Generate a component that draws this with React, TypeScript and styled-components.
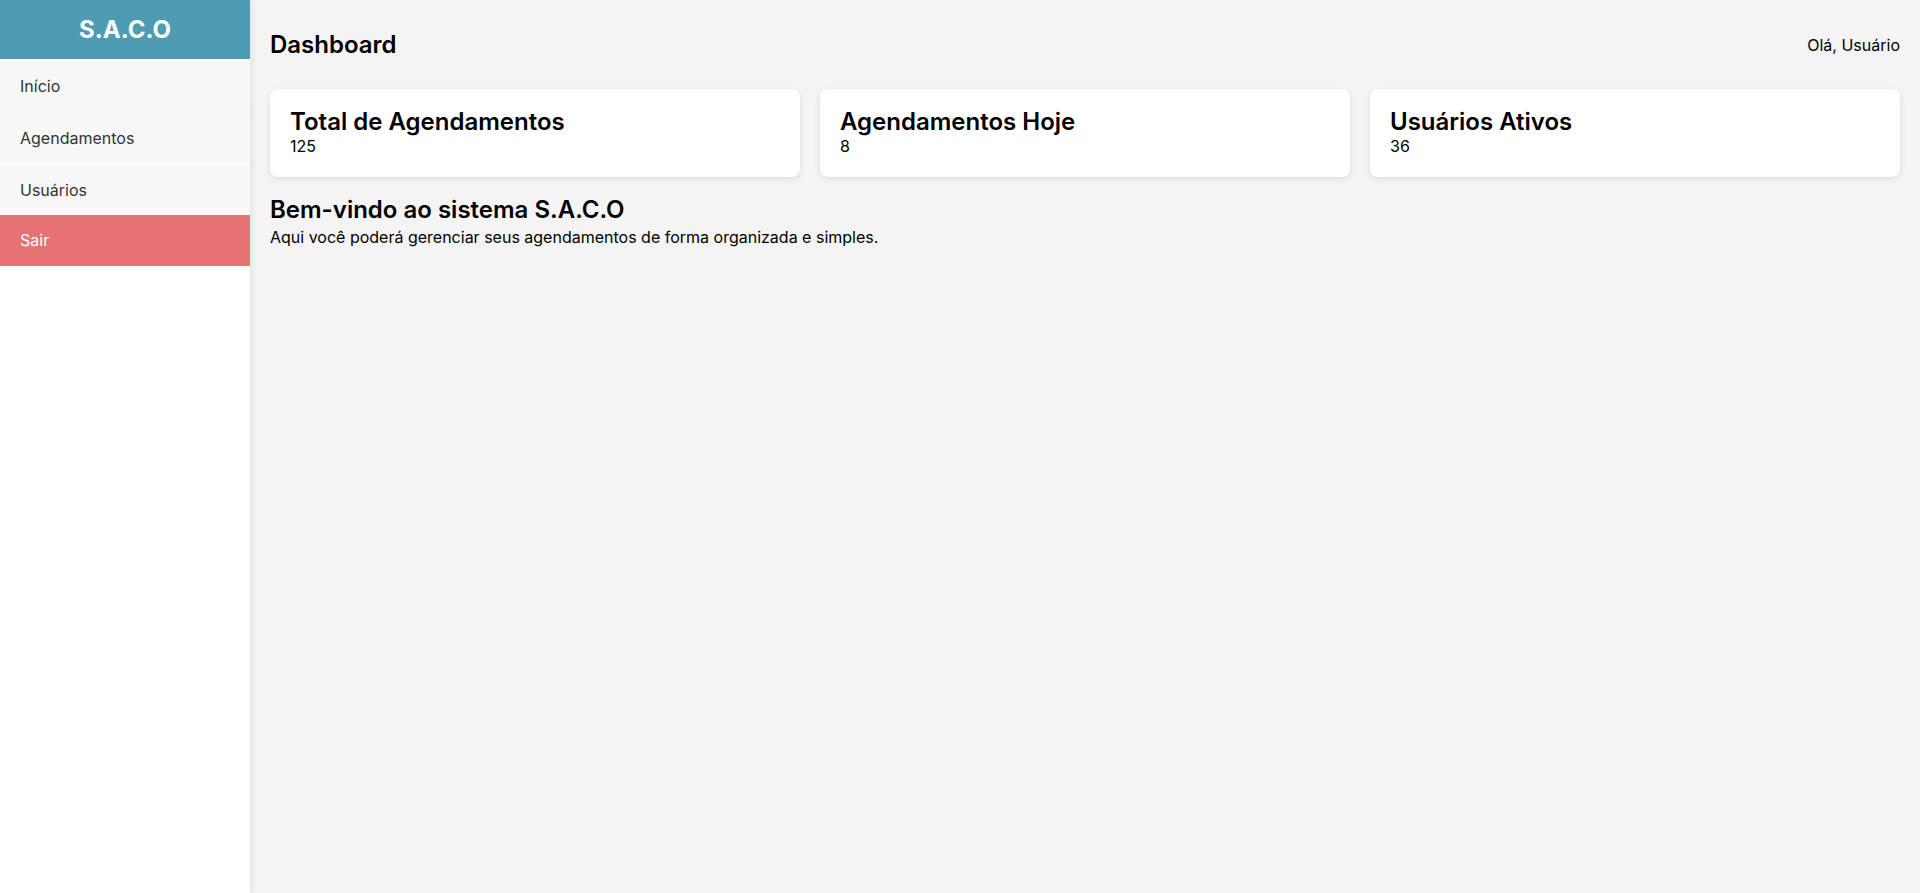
import React from "react";
import styled, { createGlobalStyle } from "styled-components";

const GlobalStyle = createGlobalStyle`
  * { box-sizing: border-box; }
  html, body { margin: 0; padding: 0; height: 100%; }
  body {
    font-family: Inter, "Noto Sans", "Liberation Sans", sans-serif;
    background: #f4f4f4;
    color: #000;
  }
  #root { height: 100%; }
`;

const Layout = styled.div`
  display: flex;
  min-height: 893px;
  height: 100vh;
`;

const Sidebar = styled.aside`
  width: 250px;
  flex-shrink: 0;
  background: #ffffff;
  box-shadow: 2px 0 6px rgba(0, 0, 0, 0.08);
  display: flex;
  flex-direction: column;
  position: relative;
  z-index: 1;
`;

const Brand = styled.h2`
  margin: 0;
  height: 59px;
  display: flex;
  align-items: center;
  justify-content: center;
  background: #4e9bb4;
  color: #ffffff;
  font-size: 24px;
  font-weight: 700;
`;

const Nav = styled.nav`
  display: flex;
  flex-direction: column;
`;

const NavLink = styled.a<{ $danger?: boolean }>`
  display: block;
  height: ${(p) => (p.$danger ? "51px" : "50px")};
  margin-top: ${(p) => (p.$danger ? "0" : "2px")};
  padding: 0 20px;
  line-height: ${(p) => (p.$danger ? "51px" : "50px")};
  font-size: 16px;
  text-decoration: none;
  color: ${(p) => (p.$danger ? "#ffffff" : "#333333")};
  background: ${(p) => (p.$danger ? "#e57373" : "#f8f8f8")};
  cursor: pointer;
`;

const Main = styled.main`
  flex: 1;
  padding: 20px;
  background: #f4f4f4;
`;

const Header = styled.header`
  display: flex;
  justify-content: space-between;
  align-items: center;
  height: 49px;
  margin-bottom: 20px;
`;

const PageTitle = styled.h1`
  margin: 0;
  font-size: 24px;
  font-weight: 600;
`;

const Greeting = styled.span`
  font-size: 16px;
`;

const CardGrid = styled.section`
  display: grid;
  grid-template-columns: repeat(3, 1fr);
  gap: 20px;
  margin-bottom: 18px;
`;

const Card = styled.div`
  background: #ffffff;
  border-radius: 8px;
  padding: 20px;
  height: 88px;
  box-shadow: 0 2px 6px rgba(0, 0, 0, 0.1);
`;

const CardTitle = styled.h3`
  margin: 0 0 1px;
  font-size: 24px;
  line-height: 1.1;
  font-weight: 600;
`;

const CardValue = styled.p`
  margin: 0;
  font-size: 16px;
`;

const Welcome = styled.section``;

const WelcomeTitle = styled.h2`
  margin: 0 0 3px;
  font-size: 24px;
  font-weight: 600;
`;

const WelcomeText = styled.p`
  margin: 0;
  font-size: 16px;
`;

const stats = [
  { title: "Total de Agendamentos", value: "125" },
  { title: "Agendamentos Hoje", value: "8" },
  { title: "Usuários Ativos", value: "36" },
];

export default function App() {
  return (
    <>
      <GlobalStyle />
      <Layout>
        <Sidebar>
          <Brand>S.A.C.O</Brand>
          <Nav>
            <NavLink>Início</NavLink>
            <NavLink>Agendamentos</NavLink>
            <NavLink>Usuários</NavLink>
            <NavLink $danger>Sair</NavLink>
          </Nav>
        </Sidebar>
        <Main>
          <Header>
            <PageTitle>Dashboard</PageTitle>
            <Greeting>Olá, Usuário</Greeting>
          </Header>
          <CardGrid>
            {stats.map((s) => (
              <Card key={s.title}>
                <CardTitle>{s.title}</CardTitle>
                <CardValue>{s.value}</CardValue>
              </Card>
            ))}
          </CardGrid>
          <Welcome>
            <WelcomeTitle>Bem-vindo ao sistema S.A.C.O</WelcomeTitle>
            <WelcomeText>
              Aqui você poderá gerenciar seus agendamentos de forma organizada e simples.
            </WelcomeText>
          </Welcome>
        </Main>
      </Layout>
    </>
  );
}
